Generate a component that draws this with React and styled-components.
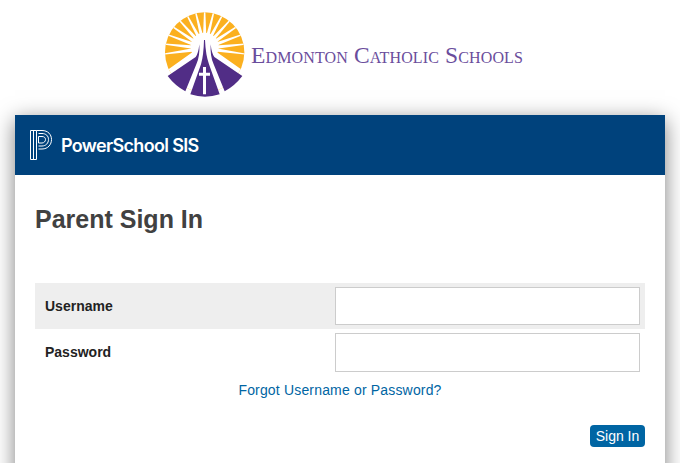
import React from "react";
import styled, { createGlobalStyle } from "styled-components";

const Global = createGlobalStyle`
  html, body { margin: 0; padding: 0; background: #fff; height: 100%; overflow: hidden; }
  body { font-family: "Liberation Sans", Arial, sans-serif; }
`;
const Page = styled.div`width: 680px; height: 463px; overflow: hidden;`;
const Branding = styled.div`
  height: 115px; display: flex; align-items: flex-start; padding-left: 160px; box-sizing: border-box;
`;
const SunLogo = styled.svg`width: 90px; height: 90px; margin-top: 10px; flex: none;`;
const Wordmark = styled.div`
  margin: 42px 0 0 1px;
  font-family: "Liberation Serif", serif; font-variant: small-caps;
  font-size: 23.5px; line-height: 26px; color: #6a4d9c; white-space: nowrap; letter-spacing: .13px;
`;
const Card = styled.main`
  width: 650px; margin-left: 15px; height: 400px; background: #fff;
  box-shadow: 0 5px 20px rgba(0,0,0,.5);
`;
const Banner = styled.header`
  height: 60px; background: #00427c; display: flex; align-items: center; padding-left: 15px; gap: 9px;
`;
const PsIcon = styled.svg`width: 22px; height: 30px; flex: none;`;
const Product = styled.div`
  font-family: Inter, "Noto Sans", sans-serif; font-weight: 600; font-size: 18px; color: #fff; letter-spacing: -.67px;
`;
const Content = styled.div`padding: 0 20px;`;
const Title = styled.h1`
  margin: 0; padding-top: 29px; height: 79px; box-sizing: content-box;
  font-size: 25px; line-height: 30px; font-weight: bold; color: #414141;
`;
const Row = styled.div`
  height: 46px; display: flex; align-items: center; justify-content: space-between;
  padding: 0 5px 0 10px; background: ${p => (p.$shaded ? "#eee" : "transparent")};
`;
const Label = styled.label`font-size: 14px; font-weight: bold; color: #222;`;
const Field = styled.input`
  width: 305px; height: ${p => p.$h}px; box-sizing: border-box; background: #fff;
  border: 1px solid #ccc; border-radius: 0; padding: 0; margin: 0; outline: none;
`;
const HelpRow = styled.div`text-align: center; margin-top: 6px; line-height: 18px;`;
const Help = styled.a`font-size: 14px; color: #0065a3; letter-spacing: .17px; text-decoration: none;`;
const Actions = styled.div`display: flex; justify-content: flex-end; margin-top: 26px;`;
const Submit = styled.button`
  width: 55px; height: 22px; padding: 0; border: 0; border-radius: 4px; background: #0065a3;
  color: #fff; font: 14px/22px "Liberation Sans", Arial, sans-serif;
`;

const rays = [-98,-84,-70,-56,-42,-28,-14,0,14,28,42,56,70,84,98];

export default function App() {
  return (
    <Page>
      <Global />
      <Branding>
        <SunLogo viewBox="15 15 270 270" aria-hidden="true">
          <defs>
            <clipPath id="sun"><ellipse cx="149" cy="142" rx="119" ry="120" /></clipPath>
          </defs>
          <g clipPath="url(#sun)">
            <rect x="20" y="15" width="260" height="250" fill="#fbb01f" />
            {rays.map(a => (
              <polygon key={a} points="143,120 155,120 150.5,5 147.5,5" fill="#fff"
                transform={`rotate(${a} 149 130)`} />
            ))}
            <circle cx="149" cy="125" r="42" fill="#fff" />
            <path d="M0 222 L112 142 L149 100 L186 142 L300 222 L300 300 L0 300 Z" fill="#fff" />
          </g>
          <path d="M38 213 L122 156 Q130 146 133 118 Q135 155 124 178 L91 259 Q60 242 38 213 Z" fill="#512d86" />
          <path d="M262 213 L178 156 Q170 146 167 118 Q165 155 176 178 L209 259 Q240 242 262 213 Z" fill="#512d86" />
          <path d="M106 268 L138 178 Q146 150 147 105 L150 105 Q152 150 162 178 L194 268 Q150 282 106 268 Z" fill="#512d86" />
          <path d="M144 186 H153 V203 H165 V212 H153 V268 H144 V212 H132 V203 H144 Z" fill="#fff" />
        </SunLogo>
        <Wordmark>Edmonton Catholic Schools</Wordmark>
      </Branding>
      <Card>
        <Banner>
          <PsIcon viewBox="0 0 22 30" fill="none" stroke="#fff" strokeWidth="1" aria-hidden="true">
            <path d="M.5.5H6.5V29.5H.5Z" />
            <path d="M3.5.5V29.5" />
            <path d="M6.5.5H12C18 .5 21.5 4.5 21.5 9.5S18 19 12 19H8.5" />
            <path d="M8.5 3.5H12C16 3.5 18.5 6 18.5 9.5S16 16 12 16H8.5" />
            <path d="M8.5 6.5H12C14 6.5 15.5 7.6 15.5 9.5S14 13 12 13H8.5Z" />
          </PsIcon>
          <Product>PowerSchool SIS</Product>
        </Banner>
        <Content>
          <Title>Parent Sign In</Title>
          <Row $shaded>
            <Label htmlFor="user">Username</Label>
            <Field id="user" $h={38} />
          </Row>
          <Row>
            <Label htmlFor="pass">Password</Label>
            <Field id="pass" type="password" $h={39} />
          </Row>
          <HelpRow><Help href="#">Forgot Username or Password?</Help></HelpRow>
          <Actions><Submit>Sign In</Submit></Actions>
        </Content>
      </Card>
    </Page>
  );
}
